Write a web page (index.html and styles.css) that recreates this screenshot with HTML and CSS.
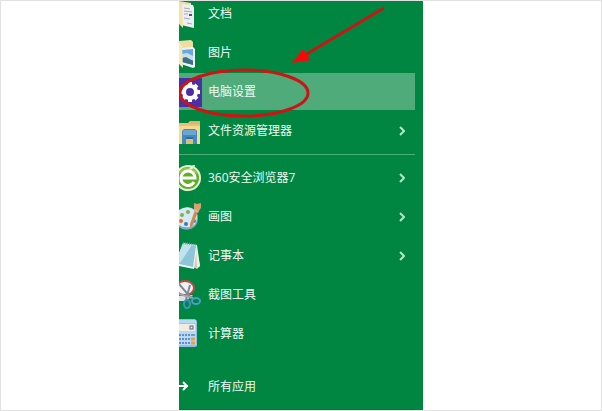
FILE: index.html
```html
<!DOCTYPE html>
<html lang="zh-CN">

<head>
    <meta charset="UTF-8" />
    <meta name="viewport" content="width=device-width, initial-scale=1.0" />
    <title>开始菜单</title>
    <link rel="stylesheet" href="styles.css">
</head>

<body>
    <main class="start-menu">
        <nav class="places">
            <a class="item" href="#documents">
                <svg class="icon" viewBox="0 0 24 37">
                    <path d="M0 6l12 2v18H0z" fill="#eedfa2" />
                    <path d="M3 9l11 1 1 3v20L2 30z" fill="#eceef2" />
                    <path d="M5 13l6 1M5 16l8 1M5 19h4M5 23l6 1M8 28l5 1" stroke="#a3a9b6" />
                    <path d="M10 19h3v2h-3z" fill="#4a566f" />
                    <path d="M0 9l3 2 1 22-4-4z" fill="#f4e3a4" />
                </svg>
                <span>文档</span>
            </a>
            <a class="item" href="#pictures">
                <svg class="icon" viewBox="0 0 24 37">
                    <path d="M0 7l12-1 2 2v16H0z" fill="#eddda0" />
                    <path d="M2 14l12-1 2 2v18l-2 1-12-4z" fill="#eef3f7" />
                    <path d="M3 16l11-1v16L3 28z" fill="#6aa9dc" />
                    <path d="M3 20l5-1 6 3v4l-11-1z" fill="#c4dfee" />
                    <path d="M3 24l4-1 7 4v4L3 28z" fill="#3f6f86" />
                    <path d="M0 9l3 2 1 23-4-4z" fill="#f5e9b9" />
                </svg>
                <span>图片</span>
            </a>
            <a class="item active" href="#settings">
                <svg class="icon" viewBox="0 0 24 37">
                    <path d="M0 5h23v29H0z" fill="#4a2fa5" />
                    <circle cx="11" cy="19" r="6" fill="none" stroke="#fff" stroke-width="4" />
                    <path d="M11 9v4M11 25v4M1 19h4M17 19h4M4 12l3 3M15 23l3 3M4 26l3-3M15 15l3-3" stroke="#fff" stroke-width="4" />
                </svg>
                <span>电脑设置</span>
            </a>
            <a class="item" href="#explorer">
                <svg class="icon" viewBox="0 0 24 37">
                    <path d="M0 11h9l2-2h10v23H0z" fill="#e9c176" />
                    <path d="M0 14h21v18H0z" fill="#f6d991" />
                    <path d="M11 9h10v3H10z" fill="#dfb468" />
                    <path d="M3 19l2-2h11l2 2v13h-4v-5H7v5H3z" fill="#4588bd" />
                    <path d="M4 19l1-1h11l1 1v4H4z" fill="#68a6d4" />
                    <path d="M7 25h7v2H7z" fill="#2e6da2" />
                    <path d="M7 27h7v5H7z" fill="#d9be80" />
                </svg>
                <span>文件资源管理器</span>
                <svg class="chevron" viewBox="0 0 6 12"><path d="M1 2l4 4-4 4" /></svg>
            </a>
        </nav>

        <nav class="programs">
            <a class="item" href="#browser">
                <svg class="icon" viewBox="0 0 24 37">
                    <circle cx="9" cy="19" r="13" fill="#e9f4d8" />
                    <circle cx="9" cy="19" r="11" fill="#5fae28" />
                    <path d="M-1 15a11 11 0 0 1 20 0q-10-4-20 0z" fill="#8dcc4b" />
                    <path d="M2 19h14a7 7 0 0 0-14 0a7 7 0 0 0 13 4" fill="none" stroke="#fff" stroke-width="3" />
                    <path d="M10 11q1-5 6-5 0 4-6 5" fill="#e4f6c8" />
                </svg>
                <span>360安全浏览器7</span>
                <svg class="chevron" viewBox="0 0 6 12"><path d="M1 2l4 4-4 4" /></svg>
            </a>
            <a class="item" href="#paint">
                <svg class="icon" viewBox="0 0 24 37">
                    <path d="M0 13q6-5 13-3 6 3 6 10 0 8-7 11-8 2-12-2z" fill="#7ea9c4" />
                    <path d="M0 12q6-4 12-2 6 3 6 9 0 8-7 10-7 1-11-2z" fill="#d5e9f4" />
                    <circle cx="3" cy="17" r="2" fill="#74b83d" />
                    <circle cx="9" cy="14" r="2" fill="#7ab648" />
                    <circle cx="2" cy="23" r="2" fill="#e56a35" />
                    <circle cx="7" cy="26" r="2" fill="#3b77c4" />
                    <circle cx="15" cy="23" r="2" fill="#3f86c9" />
                    <path d="M16 12l3 1-5 14-3 3v-4z" fill="#d48a45" />
                    <path d="M15 5l3 1 4-1v5l-3 4-4-2z" fill="#d9a173" />
                    <path d="M16 11l4 2-1 2-4-2z" fill="#c5b9a8" />
                </svg>
                <span>画图</span>
                <svg class="chevron" viewBox="0 0 6 12"><path d="M1 2l4 4-4 4" /></svg>
            </a>
            <a class="item" href="#notepad">
                <svg class="icon" viewBox="0 0 24 37">
                    <path d="M17 8l4 21-3 3-4-2z" fill="#d5ccb6" />
                    <path d="M4 6l14 2-3 24-15-3V16z" fill="#eef6f8" />
                    <path d="M4 7l13 2-3 21-14-3V17z" fill="#8fc5d9" />
                    <path d="M4 7l9 1L1 26l-1-1v-8z" fill="#c2e2ec" />
                    <path d="M17 9l1-1 3 21-3 2z" fill="#f0f0ea" />
                    <path d="M4 6l14 2" stroke="#7c979e" stroke-width="2" stroke-dasharray="1 1" />
                </svg>
                <span>记事本</span>
                <svg class="chevron" viewBox="0 0 6 12"><path d="M1 2l4 4-4 4" /></svg>
            </a>
            <a class="item" href="#snipping">
                <svg class="icon" viewBox="0 0 24 37">
                    <ellipse cx="6" cy="12" rx="9" ry="7" fill="#f0f1f2" stroke="#c14848" stroke-width="2" />
                    <path d="M0 20l14-1-7 6H0z" fill="#dce2e5" />
                    <path d="M0 8l12 14M11 9L7 24" stroke="#7d8a94" stroke-width="2" />
                    <path d="M0 18l14 4" stroke="#9ba5ab" stroke-width="2" />
                    <ellipse cx="8" cy="28" rx="3" ry="4" fill="none" stroke="#3f8fc4" stroke-width="2" />
                    <ellipse cx="17" cy="25" rx="4" ry="3" fill="none" stroke="#4b9bd0" stroke-width="2" />
                </svg>
                <span>截图工具</span>
            </a>
            <a class="item" href="#calculator">
                <svg class="icon" viewBox="0 0 24 37">
                    <path d="M0 4h16l2 2v25l-2 1H0z" fill="#8fbfe8" />
                    <path d="M0 5h17v25H0z" fill="#b9d9f2" />
                    <path d="M0 8h16v8H0z" fill="#f0ece0" />
                    <path d="M0 8h16v1H0z" fill="#d5b98a" />
                    <rect x="11" y="11" width="3" height="3" fill="none" stroke="#4d6684" />
                    <path d="M0 20h11M0 24h11M0 28h11" stroke="#5f8fc4" stroke-width="2" stroke-dasharray="2 1" />
                    <path d="M12 20h4M12 24h4" stroke="#6f9cca" stroke-width="2" />
                    <path d="M12 28h4M12 24h4" stroke="#e9a04c" stroke-width="3" />
                </svg>
                <span>计算器</span>
            </a>
        </nav>

        <nav class="all-apps">
            <a class="item" href="#all">
                <svg class="icon" viewBox="0 0 24 37">
                    <path d="M0 18h9M4 14l4 4-4 4" fill="none" stroke="#fff" stroke-width="2" />
                </svg>
                <span>所有应用</span>
            </a>
        </nav>

        <!-- red circle and arrow pointing at 电脑设置 -->
        <svg class="marker" viewBox="0 0 244 120">
            <ellipse cx="65" cy="92" rx="64" ry="23" />
            <path d="M205 7L126 54" />
            <path class="head" d="M113 62l11-14 8 11z" />
        </svg>
    </main>
</body>

</html>
```

FILE: styles.css
```css
:root{
    --green: #008641;
    --highlight: #4fab79;
    --frame: #e1e1e1;
    --marker: #cc1414;
}

*{
    margin: 0;
    padding: 0;
    box-sizing: border-box;
}
body{
    display: flex;
    justify-content: center;
    height: 100vh;
    background-color: white;
    border: 1px solid var(--frame);
    font-family: "Open Sans", "Noto Sans CJK SC", sans-serif;
    font-size: 12px;
    line-height: 18px;
}
.start-menu{
    position: relative;
    display: flex;
    flex-direction: column;
    justify-content: flex-end;
    width: 244px;
    padding: 0 8px 5px 0;
    background-color: var(--green);
    overflow: hidden;
}
.start-menu::after{
    content: "";
    position: absolute;
    left: 0;
    right: 8px;
    bottom: 0;
    height: 1px;
    background-color: #26633f;
}
nav{
    display: flex;
    flex-direction: column;
    gap: 2px;
}
.places{
    padding-bottom: 5px;
    border-bottom: 1px solid var(--highlight);
}
.programs{
    padding: 4px 0 16px;
}
.item{
    display: flex;
    align-items: center;
    gap: 5px;
    height: 37px;
    flex-shrink: 0;
    padding-right: 10px;
    color: #f1faf4;
    text-decoration: none;
    white-space: nowrap;
}
.active{
    background-color: var(--highlight);
}
.icon{
    width: 24px;
    height: 37px;
}
.chevron{
    width: 6px;
    height: 12px;
    margin-left: auto;
    fill: none;
    stroke: #b4e6c6;
    stroke-width: 2;
}
.marker{
    position: absolute;
    top: 0;
    left: 0;
    width: 244px;
    height: 120px;
    fill: none;
    stroke: var(--marker);
    stroke-width: 3;
    pointer-events: none;
}
.marker .head{
    fill: #f50a0a;
    stroke: none;
}
```
